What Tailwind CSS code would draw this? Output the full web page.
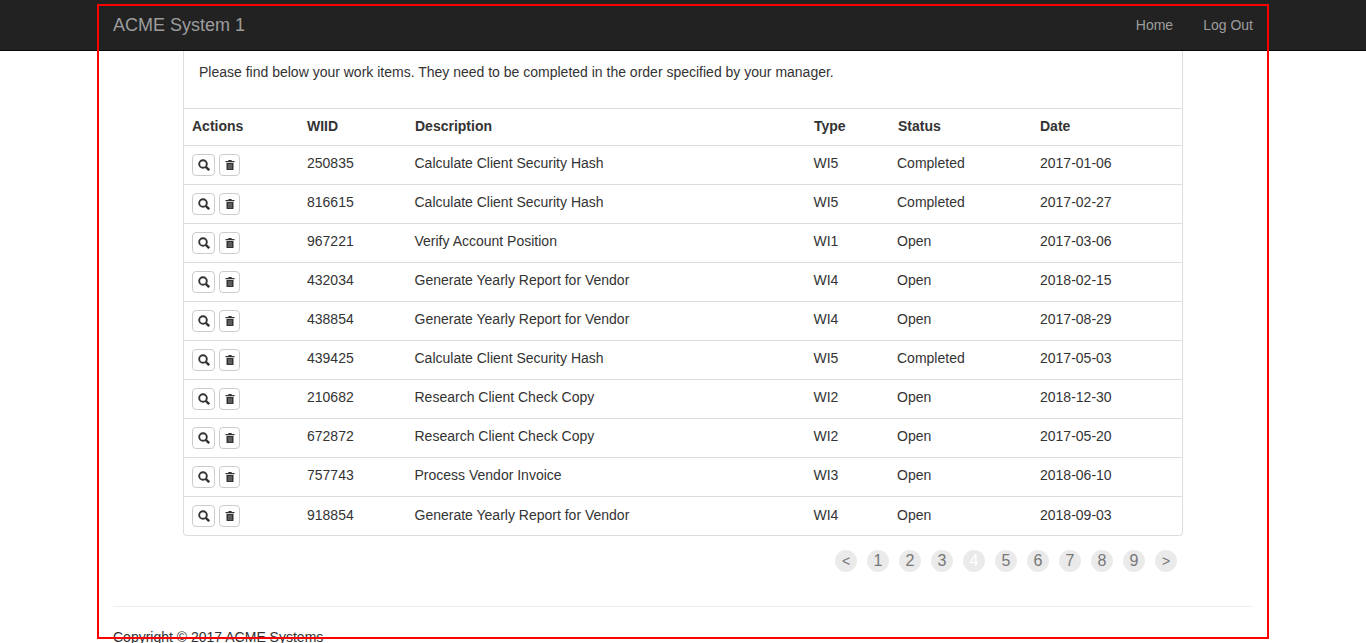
<!DOCTYPE html>
<html lang="en">
<head>
    <meta charset="UTF-8">
    <meta name="viewport" content="width=device-width, initial-scale=1.0">
    <title>ACME System 1</title>
    <script src="https://cdn.jsdelivr.net/npm/@tailwindcss/browser@4"></script>
</head>
<body class="relative min-h-screen bg-white font-['Liberation_Sans',Arial,sans-serif] text-sm leading-5 text-[#333]">
    <!-- Navbar -->
    <nav class="h-[51px] bg-[#222] border-b border-[#080808]">
        <div class="w-[1170px] mx-auto px-[15px] flex items-center justify-between h-[50px]">
            <a href="#" class="text-lg text-[#9d9d9d]">ACME System 1</a>
            <div class="flex gap-[30px] text-[#9d9d9d]">
                <a href="#">Home</a>
                <a href="#">Log Out</a>
            </div>
        </div>
    </nav>

    <div class="w-[1170px] mx-auto px-[15px]">
        <!-- Panel -->
        <div class="w-[1000px] ml-[70px] border border-t-0 border-[#ddd] rounded-b">
            <p class="h-[57px] px-[15px] pt-[11px]">Please find below your work items. They need to be completed in the order specified by your manager.</p>
            <table class="w-full table-fixed border-collapse">
                <colgroup>
                    <col class="w-[115px]">
                    <col class="w-[107.5px]">
                    <col class="w-[399px]">
                    <col class="w-[83.5px]">
                    <col class="w-[143px]">
                    <col>
                </colgroup>
                <thead>
                    <tr class="h-[37px] border-t border-[#ddd] text-left">
                        <th class="pl-2 pb-[2px] font-bold">Actions</th>
                        <th class="pl-2 pb-[2px] font-bold">WIID</th>
                        <th class="pl-[8.5px] pb-[2px] font-bold">Description</th>
                        <th class="pl-[8.5px] pb-[2px] font-bold">Type</th>
                        <th class="pl-[9px] pb-[2px] font-bold">Status</th>
                        <th class="pl-2 pb-[2px] font-bold">Date</th>
                    </tr>
                </thead>
                <tbody id="rows"></tbody>
            </table>
        </div>

        <!-- Pagination -->
        <div class="w-[1000px] ml-[70px] mt-[14px] pr-[6px] flex justify-end gap-[10px] text-base text-[#777]">
            <a href="#" class="w-[22px] h-[22px] rounded-full bg-[#eaeaea] flex items-center justify-center text-sm">&lt;</a>
            <a href="#" class="w-[22px] h-[22px] rounded-full bg-[#eaeaea] flex items-center justify-center">1</a>
            <a href="#" class="w-[22px] h-[22px] rounded-full bg-[#eaeaea] flex items-center justify-center">2</a>
            <a href="#" class="w-[22px] h-[22px] rounded-full bg-[#eaeaea] flex items-center justify-center">3</a>
            <a href="#" class="w-[22px] h-[22px] rounded-full bg-[#eaeaea] flex items-center justify-center text-white">4</a>
            <a href="#" class="w-[22px] h-[22px] rounded-full bg-[#eaeaea] flex items-center justify-center">5</a>
            <a href="#" class="w-[22px] h-[22px] rounded-full bg-[#eaeaea] flex items-center justify-center">6</a>
            <a href="#" class="w-[22px] h-[22px] rounded-full bg-[#eaeaea] flex items-center justify-center">7</a>
            <a href="#" class="w-[22px] h-[22px] rounded-full bg-[#eaeaea] flex items-center justify-center">8</a>
            <a href="#" class="w-[22px] h-[22px] rounded-full bg-[#eaeaea] flex items-center justify-center">9</a>
            <a href="#" class="w-[22px] h-[22px] rounded-full bg-[#eaeaea] flex items-center justify-center text-sm">&gt;</a>
        </div>

        <!-- Footer -->
        <hr class="mt-[34px] border-t border-[#eee]">
        <footer class="pt-5 pb-2">Copyright © 2017 ACME Systems</footer>
    </div>

    <!-- Red outline that sits over the page -->
    <div class="absolute left-[97px] top-1 w-[1172px] h-[635px] border-2 border-[#f00] pointer-events-none"></div>

    <script>
        const items = [
            ['250835', 'Calculate Client Security Hash', 'WI5', 'Completed', '2017-01-06'],
            ['816615', 'Calculate Client Security Hash', 'WI5', 'Completed', '2017-02-27'],
            ['967221', 'Verify Account Position', 'WI1', 'Open', '2017-03-06'],
            ['432034', 'Generate Yearly Report for Vendor', 'WI4', 'Open', '2018-02-15'],
            ['438854', 'Generate Yearly Report for Vendor', 'WI4', 'Open', '2017-08-29'],
            ['439425', 'Calculate Client Security Hash', 'WI5', 'Completed', '2017-05-03'],
            ['210682', 'Research Client Check Copy', 'WI2', 'Open', '2018-12-30'],
            ['672872', 'Research Client Check Copy', 'WI2', 'Open', '2017-05-20'],
            ['757743', 'Process Vendor Invoice', 'WI3', 'Open', '2018-06-10'],
            ['918854', 'Generate Yearly Report for Vendor', 'WI4', 'Open', '2018-09-03'],
        ];

        // the last row sits 1px shorter, with its text 1px lower than the others
        document.getElementById('rows').innerHTML = items.map(item => `
            <tr class="h-[39px] last:h-[38px] border-t border-[#ddd] align-top group">
                <td class="pl-2 pt-2">
                    <div class="flex gap-1">
                        <button class="w-[23px] h-[22px] border border-[#ccc] rounded flex items-center justify-center">
                            <svg class="w-3 h-3" viewBox="0 0 12 12" fill="none" stroke="#333"><circle cx="5" cy="5" r="3.8" stroke-width="1.9"/><path d="M7.800 7.800 11.200 11.200" stroke-width="2.400"/></svg>
                        </button>
                        <button class="w-[21px] h-[22px] border border-[#ccc] rounded flex items-center justify-center">
                            <svg class="w-3 h-3" viewBox="0 0 12 12" fill="#333"><path d="M4.600 1h2.800l.5 1h2.600v1.200H1.500V2h2.600zM2.500 4h7v6.400a.6.600 0 0 1-.6.600H3.100a.6.600 0 0 1-.6-.6z"/><path d="M5 5v5M7 5v5" stroke="#aaa" stroke-width=".7"/></svg>
                        </button>
                    </div>
                </td>
                <td class="pl-2 pt-[7px] group-last:pt-2">${item[0]}</td>
                <td class="pl-2 pt-[7px] group-last:pt-2">${item[1]}</td>
                <td class="pl-2 pt-[7px] group-last:pt-2">${item[2]}</td>
                <td class="pl-2 pt-[7px] group-last:pt-2">${item[3]}</td>
                <td class="pl-2 pt-[7px] group-last:pt-2">${item[4]}</td>
            </tr>
        `).join('');
    </script>
</body>
</html>
